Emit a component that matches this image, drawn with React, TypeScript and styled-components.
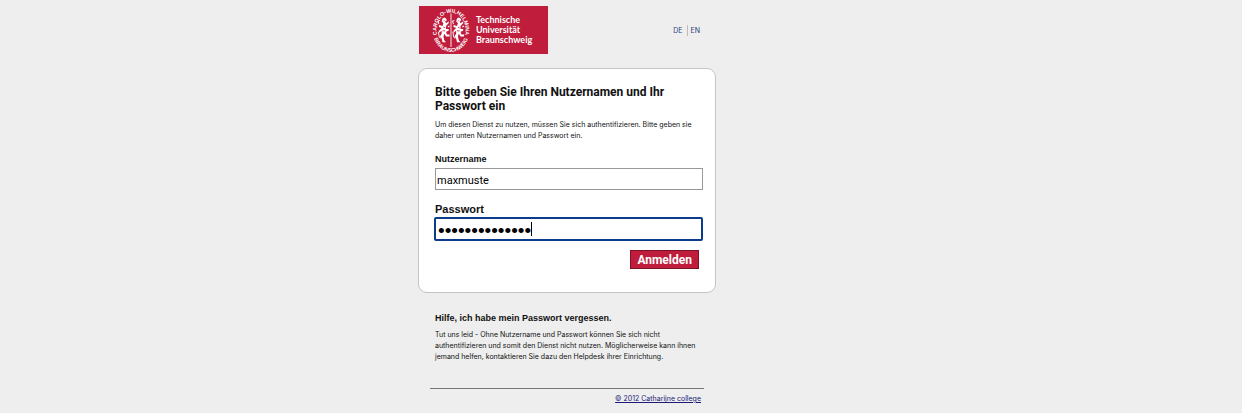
import React, { useState } from "react";
import styled, { createGlobalStyle } from "styled-components";

const GlobalStyle = createGlobalStyle`
  * { box-sizing: border-box; }
  body {
    margin: 0;
    background: #eeeeee;
    color: #111111;
    font-family: Inter, "Liberation Sans", Arial, sans-serif;
    font-size: 7px;
    line-height: 11px;
  }
  h1, h2, p { margin: 0; }
`;

const Page = styled.div`
  max-width: 406px;
  margin: 0 auto;
  padding: 6px 0 8px;
`;

const Column = styled.div`
  max-width: 298px;
`;

const Header = styled.header`
  display: flex;
  align-items: center;
  justify-content: space-between;
  padding: 0 16px 0 1px;
`;

const Logo = styled.div`
  display: flex;
  align-items: center;
  gap: 5px;
  width: 129px;
  height: 48px;
  padding-left: 12px;
  background: #c01c3c;
  color: #ffffff;
`;

const LogoName = styled.span`
  font: bold 9px/10px Lato, "Open Sans", sans-serif;
`;

const Seal = styled.svg`
  flex: none;
  width: 40px;
  height: 46px;
`;

const Languages = styled.nav`
  display: flex;
`;

const LanguageLink = styled.a`
  padding: 0 4px;
  color: #27407c;
  text-decoration: none;

  & + & {
    padding: 0 0 0 3px;
    border-left: 1px solid #c4b8b8;
  }
`;

const Card = styled.main`
  margin-top: 14px;
  padding: 16px 12px 23px 16px;
  background: #ffffff;
  border: 1px solid #c4c4c4;
  border-radius: 9px;
`;

const Title = styled.h1`
  color: #111111;
  font: bold 12px/14px Roboto, "Liberation Sans", sans-serif;
`;

const Intro = styled.p`
  margin-top: 6px;
`;

const Form = styled.form`
  display: flex;
  flex-direction: column;
  margin-top: 11px;
`;

const Label = styled.label<{ $large?: boolean }>`
  color: #111111;
  font: bold ${(p) => (p.$large ? 11 : 9)}px/14px "Liberation Sans", Arial, sans-serif;
`;

const Field = styled.div`
  position: relative;
  margin: 2px 0 12px;

  &:last-of-type {
    margin: 1px 0 9px -1px;
  }
`;

const Input = styled.input<{ $active?: boolean }>`
  display: block;
  width: 100%;
  height: ${(p) => (p.$active ? 24 : 22)}px;
  padding: 2px 1px 0;
  color: #000000;
  background: #ffffff;
  border: ${(p) => (p.$active ? "2px solid #0b3c8c" : "1px solid #999999")};
  border-radius: ${(p) => (p.$active ? 2 : 0)}px;
  outline: none;
  font: ${(p) => (p.$active ? '19px/20px "Liberation Sans"' : "11px/18px Roboto")}, sans-serif;
  ${(p) => p.$active && "padding: 3px 2px 0;"}
`;

const Caret = styled.span`
  position: absolute;
  left: 97px;
  top: 5px;
  width: 1px;
  height: 14px;
  background: #000000;
`;

const Submit = styled.button`
  align-self: flex-end;
  height: 19px;
  margin-right: 4px;
  padding: 0 6px;
  color: #ffffff;
  background: #c01c3c;
  border: 1px solid #7c1228;
  font: bold 12px/16px Roboto, "Open Sans", sans-serif;
`;

const Help = styled.section`
  padding: 18px 16px 0 17px;
`;

const HelpTitle = styled.h2`
  color: #111111;
  font: bold 9px/14px "Liberation Sans", Arial, sans-serif;
`;

const HelpText = styled.p`
  margin-top: 4px;
`;

const Footer = styled.footer`
  margin: 26px 12px 0;
  padding: 4px 3px 0;
  border-top: 1px solid #777777;
  text-align: right;
`;

const FooterLink = styled.a`
  color: #1c1c78;
`;

const LION =
  "M4 1 L6 0 L8 1 L9 3 L7 4 L8 6 L11 4 L11 6 L9 8 L8 9 L8 12 L11 12 L11 14 L8 15 L9 18 L12 18 L12 20 L8 20 L6 17 L5 20 L6 24 L8 26 L4 26 L3 22 L1 20 L3 17 L3 14 L0 16 L0 14 L3 11 L0 10 L0 8 L4 9 L5 6 L3 4 Z";
const TAIL = "M2 22 C-2 20 1 17 -1 15 M0 7 L-1 4 L1 3 M10 10 L12 9";

function Lion({ transform }: { transform: string }) {
  return (
    <g transform={transform}>
      <path d={LION} fill="#fff" />
      <path d={TAIL} fill="none" stroke="#fff" strokeWidth="1.1" />
      <path d="M5 10 L7 11 M4 14 L7 14 M5 4 L6 3" stroke="#c01c3c" strokeWidth="0.9" />
    </g>
  );
}

function UniversitySeal() {
  return (
    <Seal viewBox="0 0 40 46" aria-hidden="true">
      <defs>
        <path id="seal-top" d="M20 41 A14.5 17.7 0 0 1 20 5.6 A14.5 17.7 0 0 1 20 41" />
        <path id="seal-bottom" d="M20 1.6 A18.3 21.7 0 0 0 20 45 A18.3 21.7 0 0 0 20 1.6" />
      </defs>
      <g fill="#fff" fontFamily="Liberation Sans, sans-serif" fontSize="5.4" fontWeight="bold">
        <text textAnchor="middle">
          <textPath href="#seal-top" startOffset="50%">CAROLO-WILHELMINA</textPath>
        </text>
        <text textAnchor="middle">
          <textPath href="#seal-bottom" startOffset="50%">BRAUNSCHWEIG</textPath>
        </text>
      </g>
      <path d="M20 6.5 V40" stroke="#fff" strokeWidth="0.9" />
      <Lion transform="translate(8 10.5) scale(0.88 0.95)" />
      <Lion transform="translate(22.5 10.5) scale(0.88 0.95)" />
    </Seal>
  );
}

export default function App() {
  const [user, setUser] = useState("maxmuste");
  const [password, setPassword] = useState("musterpasswort");

  return (
    <>
      <GlobalStyle />
      <Page>
        <Column>
          <Header>
            <Logo>
              <UniversitySeal />
              <LogoName>
                Technische
                <br />
                Universität
                <br />
                Braunschweig
              </LogoName>
            </Logo>
            <Languages>
              <LanguageLink href="#de">DE</LanguageLink>
              <LanguageLink href="#en">EN</LanguageLink>
            </Languages>
          </Header>
          <Card>
            <Title>Bitte geben Sie Ihren Nutzernamen und Ihr Passwort ein</Title>
            <Intro>
              Um diesen Dienst zu nutzen, müssen Sie sich authentifizieren. Bitte geben sie daher
              unten Nutzernamen und Passwort ein.
            </Intro>
            <Form onSubmit={(e) => e.preventDefault()}>
              <Label htmlFor="user">Nutzername</Label>
              <Field>
                <Input id="user" value={user} onChange={(e) => setUser(e.target.value)} />
              </Field>
              <Label htmlFor="password" $large>
                Passwort
              </Label>
              <Field>
                <Input
                  id="password"
                  type="password"
                  $active
                  value={password}
                  onChange={(e) => setPassword(e.target.value)}
                />
                <Caret />
              </Field>
              <Submit type="submit">Anmelden</Submit>
            </Form>
          </Card>
          <Help>
            <HelpTitle>Hilfe, ich habe mein Passwort vergessen.</HelpTitle>
            <HelpText>
              Tut uns leid - Ohne Nutzername und Passwort können Sie sich nicht authentifizieren
              und somit den Dienst nicht nutzen. Möglicherweise kann ihnen jemand helfen,
              kontaktieren Sie dazu den Helpdesk ihrer Einrichtung.
            </HelpText>
          </Help>
          <Footer>
            <FooterLink href="#college">© 2012 Catharijne college</FooterLink>
          </Footer>
        </Column>
      </Page>
    </>
  );
}
